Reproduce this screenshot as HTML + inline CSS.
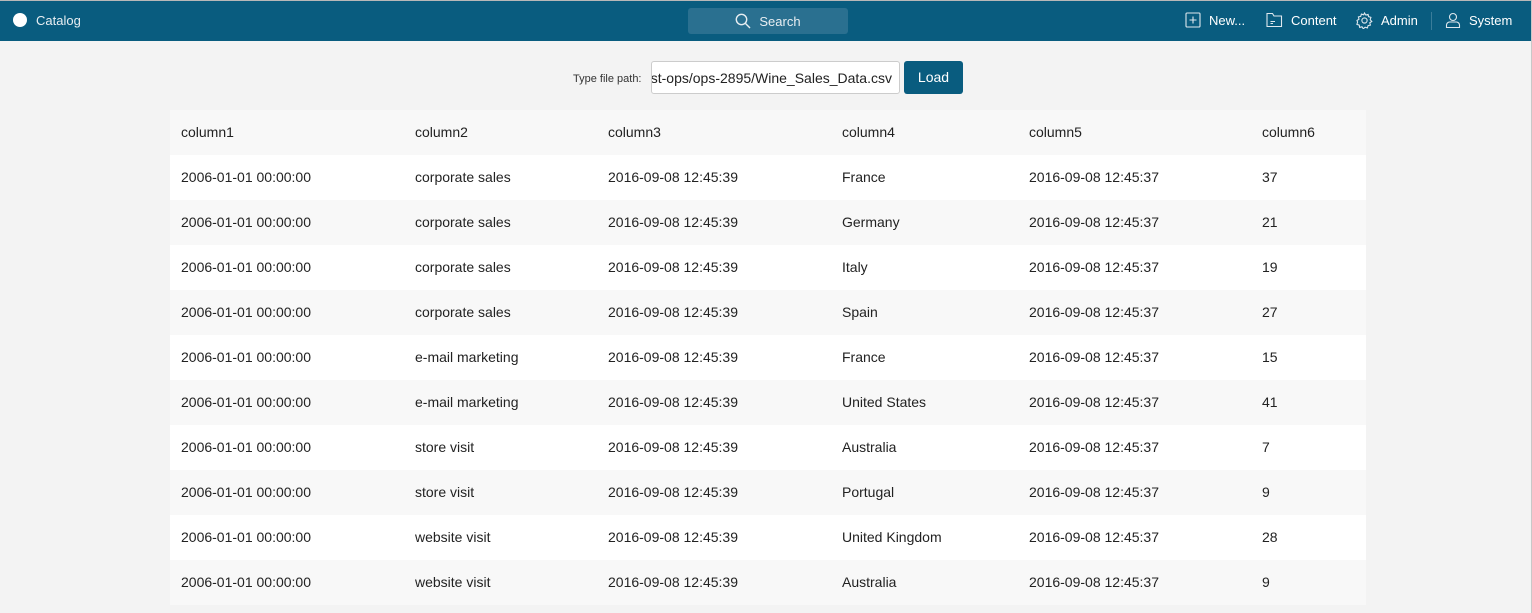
<!DOCTYPE html>
<html><head><meta charset="utf-8"><style>
*{margin:0;padding:0;box-sizing:border-box}
body{width:1532px;height:613px;background:#f3f3f3;font-family:"Liberation Sans",Arial,sans-serif;position:relative;overflow:hidden}
.topline{position:absolute;left:0;top:0;width:1532px;height:1px;background:#b8b8b8}
.rline{position:absolute;right:0;top:0;width:1px;height:613px;background:#c8c8c8}
.nav{position:absolute;left:0;top:1px;width:1532px;height:40px;background:#095c7f;color:#fff;font-size:13px}
.nav .it{position:absolute;top:12px;display:flex;align-items:center;gap:8px}
.search{position:absolute;left:688px;top:7px;width:160px;height:26px;background:#2a7090;border-radius:3px;color:#e8eef2;font-size:13px;display:flex;align-items:center;justify-content:center;gap:8px}
.lbl{position:absolute;left:573px;top:73px;font-size:11px;color:#333}
.inp{position:absolute;left:651px;top:61px;width:249px;height:33px;background:#fff;border:1px solid #ccc;border-radius:3px;font-size:14px;color:#222;padding:0 7px 0 0;white-space:nowrap;overflow:hidden;display:flex;justify-content:flex-end;align-items:center}
.btn{position:absolute;left:904px;top:61px;width:59px;height:33px;background:#095c7f;border-radius:3px;color:#fff;font-size:14px;text-align:center;line-height:33px}
table{position:absolute;left:170px;top:110px;width:1196px;border-collapse:collapse;font-size:14px;color:#222}
td{height:45px;padding:0 0 2px 11px;white-space:nowrap}
tr:nth-child(odd){background:#f8f8f8}
tr:nth-child(even){background:#fff}
</style></head><body>
<div class="topline"></div>
<div class="nav">
 <div style="position:absolute;left:13px;top:12px;width:14px;height:14px;border-radius:50%;background:#fff"></div>
 <div style="position:absolute;left:36px;top:12px;font-size:13px;color:#e8eef2">Catalog</div>
 <div class="search"><svg width="16" height="16" viewBox="0 0 16 16" fill="none" stroke="#e8eef2" stroke-width="1.4"><circle cx="6.5" cy="6.5" r="5.2"/><path d="M10.5 10.5L15 15"/></svg>Search</div>
 <div class="it" style="left:1185px;top:11px"><svg width="16" height="16" viewBox="0 0 16 16" fill="none" stroke="#dfe8ee" stroke-width="1.1"><rect x="1" y="1" width="14" height="14" rx="1"/><path d="M8 4.5v7M4.5 8h7"/></svg><span>New...</span></div>
 <div class="it" style="left:1266px;top:11px"><svg width="17" height="16" viewBox="0 0 17 16" fill="none" stroke="#dfe8ee" stroke-width="1.1"><path d="M1 3.5V14.5H15.5V4H8L6.5 1.5H1Z"/><path d="M4.5 9.5H9M4.5 11.5H7"/></svg><span>Content</span></div>
 <div class="it" style="left:1356px;top:11px"><svg width="17" height="17" viewBox="0 0 17 17" fill="none" stroke="#dfe8ee" stroke-width="1.1"><path d="M8.5 1l1.3 2 2.3-.6.5 2.3 2.3.7-.7 2.3 1.6 1.8-2 1.3.6 2.3-2.3.5-.7 2.3-2.3-.7-1.8 1.6-1.3-2-2.3.6-.5-2.3-2.3-.7.7-2.3L1 8.5l2-1.3-.6-2.3 2.3-.5.7-2.3 2.3.7z"/><circle cx="8.5" cy="8.5" r="2.6"/></svg><span>Admin</span></div>
 <div style="position:absolute;left:1431px;top:11px;width:1px;height:18px;background:#3a7d9a"></div>
 <div class="it" style="left:1445px;top:11px"><svg width="16" height="16" viewBox="0 0 16 16" fill="none" stroke="#dfe8ee" stroke-width="1.1"><circle cx="8" cy="5" r="3.5"/><path d="M1.5 15.5v-2.5c0-1.5 1.5-3 3-3h7c1.5 0 3 1.5 3 3v2.5z"/></svg><span>System</span></div>
</div>
<div class="lbl">Type file path:</div>
<div class="inp"><span>/test-ops/ops-2895/Wine_Sales_Data.csv</span></div>
<div class="btn">Load</div>
<table>
<colgroup><col style="width:234px"><col style="width:193px"><col style="width:234px"><col style="width:187px"><col style="width:233px"><col></colgroup>
<tr><td>column1</td><td>column2</td><td>column3</td><td>column4</td><td>column5</td><td>column6</td></tr>
<tr><td>2006-01-01 00:00:00</td><td>corporate sales</td><td>2016-09-08 12:45:39</td><td>France</td><td>2016-09-08 12:45:37</td><td>37</td></tr>
<tr><td>2006-01-01 00:00:00</td><td>corporate sales</td><td>2016-09-08 12:45:39</td><td>Germany</td><td>2016-09-08 12:45:37</td><td>21</td></tr>
<tr><td>2006-01-01 00:00:00</td><td>corporate sales</td><td>2016-09-08 12:45:39</td><td>Italy</td><td>2016-09-08 12:45:37</td><td>19</td></tr>
<tr><td>2006-01-01 00:00:00</td><td>corporate sales</td><td>2016-09-08 12:45:39</td><td>Spain</td><td>2016-09-08 12:45:37</td><td>27</td></tr>
<tr><td>2006-01-01 00:00:00</td><td>e-mail marketing</td><td>2016-09-08 12:45:39</td><td>France</td><td>2016-09-08 12:45:37</td><td>15</td></tr>
<tr><td>2006-01-01 00:00:00</td><td>e-mail marketing</td><td>2016-09-08 12:45:39</td><td>United States</td><td>2016-09-08 12:45:37</td><td>41</td></tr>
<tr><td>2006-01-01 00:00:00</td><td>store visit</td><td>2016-09-08 12:45:39</td><td>Australia</td><td>2016-09-08 12:45:37</td><td>7</td></tr>
<tr><td>2006-01-01 00:00:00</td><td>store visit</td><td>2016-09-08 12:45:39</td><td>Portugal</td><td>2016-09-08 12:45:37</td><td>9</td></tr>
<tr><td>2006-01-01 00:00:00</td><td>website visit</td><td>2016-09-08 12:45:39</td><td>United Kingdom</td><td>2016-09-08 12:45:37</td><td>28</td></tr>
<tr><td>2006-01-01 00:00:00</td><td>website visit</td><td>2016-09-08 12:45:39</td><td>Australia</td><td>2016-09-08 12:45:37</td><td>9</td></tr>
</table>
<div class="rline"></div>
</body></html>
